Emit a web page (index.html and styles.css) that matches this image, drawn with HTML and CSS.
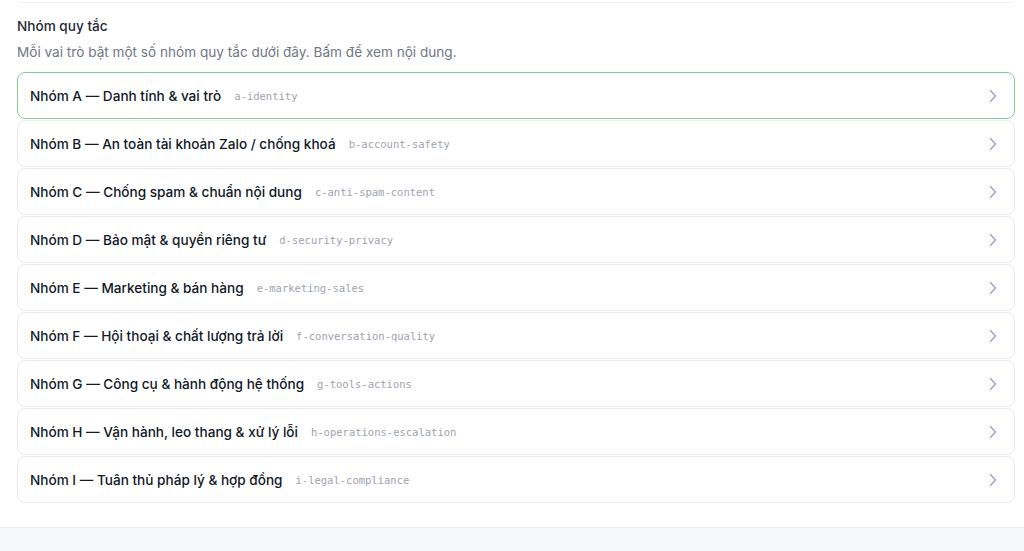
FILE: index.html
```html
<!DOCTYPE html>
<html lang="vi">
<head>
  <meta charset="UTF-8">
  <meta name="viewport" content="width=device-width, initial-scale=1.0">
  <title>Nhóm quy tắc</title>
  <link rel="stylesheet" href="styles.css">
</head>
<body>
  <div class="panel">
    <div class="prev-card"></div>

    <section class="rules">
      <h2 class="rules-title">Nhóm quy tắc</h2>
      <p class="rules-desc">Mỗi vai trò bật một số nhóm quy tắc dưới đây. Bấm để xem nội dung.</p>

      <div class="group-list">
        <div class="group active">
          <span class="group-name">Nhóm A — Danh tính &amp; vai trò</span>
          <code class="group-key">a-identity</code>
          <svg class="chev" viewBox="0 0 8 14"><path d="M1.5 1.5 L6.5 7 L1.5 12.5"/></svg>
        </div>
        <div class="group">
          <span class="group-name">Nhóm B — An toàn tài khoản Zalo / chống khoá</span>
          <code class="group-key">b-account-safety</code>
          <svg class="chev" viewBox="0 0 8 14"><path d="M1.5 1.5 L6.5 7 L1.5 12.5"/></svg>
        </div>
        <div class="group">
          <span class="group-name">Nhóm C — Chống spam &amp; chuẩn nội dung</span>
          <code class="group-key">c-anti-spam-content</code>
          <svg class="chev" viewBox="0 0 8 14"><path d="M1.5 1.5 L6.5 7 L1.5 12.5"/></svg>
        </div>
        <div class="group">
          <span class="group-name">Nhóm D — Bảo mật &amp; quyền riêng tư</span>
          <code class="group-key">d-security-privacy</code>
          <svg class="chev" viewBox="0 0 8 14"><path d="M1.5 1.5 L6.5 7 L1.5 12.5"/></svg>
        </div>
        <div class="group">
          <span class="group-name">Nhóm E — Marketing &amp; bán hàng</span>
          <code class="group-key">e-marketing-sales</code>
          <svg class="chev" viewBox="0 0 8 14"><path d="M1.5 1.5 L6.5 7 L1.5 12.5"/></svg>
        </div>
        <div class="group">
          <span class="group-name">Nhóm F — Hội thoại &amp; chất lượng trả lời</span>
          <code class="group-key">f-conversation-quality</code>
          <svg class="chev" viewBox="0 0 8 14"><path d="M1.5 1.5 L6.5 7 L1.5 12.5"/></svg>
        </div>
        <div class="group">
          <span class="group-name">Nhóm G — Công cụ &amp; hành động hệ thống</span>
          <code class="group-key">g-tools-actions</code>
          <svg class="chev" viewBox="0 0 8 14"><path d="M1.5 1.5 L6.5 7 L1.5 12.5"/></svg>
        </div>
        <div class="group">
          <span class="group-name">Nhóm H — Vận hành, leo thang &amp; xử lý lỗi</span>
          <code class="group-key">h-operations-escalation</code>
          <svg class="chev" viewBox="0 0 8 14"><path d="M1.5 1.5 L6.5 7 L1.5 12.5"/></svg>
        </div>
        <div class="group">
          <span class="group-name">Nhóm I — Tuân thủ pháp lý &amp; hợp đồng</span>
          <code class="group-key">i-legal-compliance</code>
          <svg class="chev" viewBox="0 0 8 14"><path d="M1.5 1.5 L6.5 7 L1.5 12.5"/></svg>
        </div>
      </div>
    </section>
  </div>
</body>
</html>
```

FILE: styles.css
```css
body {
  margin: 0;
  background-color: #f7f8fa;
  font-family: Inter, "Noto Sans", sans-serif;
  color: #111827;
}
.panel {
  background-color: #ffffff;
  border-bottom: 1px solid #e8ebf0;
  padding: 0 9px 24px 17px;
}
.prev-card {
  height: 2px;
  border-bottom: 1px solid #eef0f3;
  border-radius: 0 0 6px 6px;
}
.rules-title {
  margin: 13px 0 0;
  font-size: 13.6px;
  line-height: 20px;
  font-weight: 500;
  color: #1f2937;
}
.rules-desc {
  margin: 6px 0 0;
  font-size: 13.6px;
  line-height: 20px;
  color: #6f7684;
}
.group-list {
  margin-top: 10px;
  display: flex;
  flex-direction: column;
  gap: 1px;
}
.group {
  display: flex;
  align-items: center;
  height: 45px;
  padding: 0 17px 0 12px;
  border: 1px solid #e6eaf1;
  border-radius: 8px;
  background-color: #ffffff;
  cursor: pointer;
}
.group.active {
  border-color: #84cc9a;
}
.group-name {
  font-size: 13.6px;
  font-weight: 500;
  color: #111827;
}
.group-key {
  margin-left: 13px;
  font-family: "DejaVu Sans Mono", "Liberation Mono", monospace;
  font-size: 10.5px;
  color: #9ca3af;
}
.chev {
  margin-left: auto;
  width: 8px;
  height: 14px;
  fill: none;
  stroke: #9aa6c2;
  stroke-width: 1.4;
  stroke-linecap: round;
  stroke-linejoin: round;
}
```
